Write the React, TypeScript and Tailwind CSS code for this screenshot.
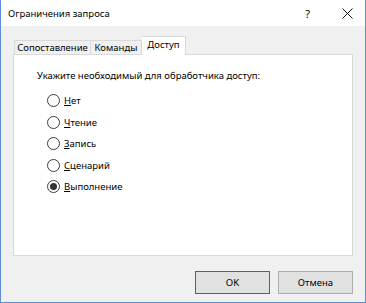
import React from "react";

const font = { fontFamily: '"Noto Sans", "Open Sans", sans-serif' };

function Radio({ label, checked }: { label: string; checked?: boolean }) {
  const first = label.slice(0, 1);
  const rest = label.slice(1);
  return (
    <div className="flex items-center h-[21.5px]">
      <div className="w-[13px] h-[13px] rounded-full border border-[#3c3c3c] bg-white flex items-center justify-center">
        {checked && <div className="w-[7px] h-[7px] rounded-full bg-[#333333]" />}
      </div>
      <span className="ml-[4px] text-[9.5px] text-black leading-[13px]">
        <span className="underline underline-offset-1">{first}</span>
        {rest}
      </span>
    </div>
  );
}

export default function App() {
  return (
    <div
      className="w-[366px] h-[303px] flex flex-col bg-[#f0f0f0] border-l border-r border-b border-[#5f8fce] overflow-hidden"
      style={font}
    >
      <div className="h-[26px] bg-white flex items-center pl-[7px] shrink-0">
        <span className="text-[9.5px] text-black leading-[13px]">Ограничения запроса</span>
        <span className="ml-auto text-[11px] text-black leading-[13px] mr-[32px]">?</span>
        <svg width="11" height="11" viewBox="0 0 11 11" className="mr-[12px]">
          <path d="M0.5 0.5 L10.5 10.5 M10.5 0.5 L0.5 10.5" stroke="#111" strokeWidth="1" />
        </svg>
      </div>
      <div className="flex-1 flex flex-col px-[12px]">
        <div className="flex items-end h-[18px] mt-[11px] pl-[1px] relative z-10 -mb-px">
          <div className="h-[15px] w-[77px] border border-[#d9d9d9] bg-[#f0f0f0] text-[9.5px] leading-[13px] text-black flex justify-center">
            Сопоставление
          </div>
          <div className="h-[15px] w-[51px] border border-l-0 border-[#d9d9d9] bg-[#f0f0f0] text-[9.5px] leading-[13px] text-black flex justify-center">
            Команды
          </div>
          <div className="h-[19px] w-[44px] border border-l-0 border-b-0 border-[#d9d9d9] bg-white text-[9.5px] leading-[16px] text-black flex justify-center">
            Доступ
          </div>
        </div>
        <div className="h-[202px] border border-[#d9d9d9] bg-white pl-[23px] pt-[14px]">
          <div className="text-[9.5px] leading-[13px] text-black">
            Укажите необходимый для обработчика доступ:
          </div>
          <div className="mt-[8px] pl-[10px] flex flex-col">
            <Radio label="Нет" />
            <Radio label="Чтение" />
            <Radio label="Запись" />
            <Radio label="Сценарий" />
            <Radio label="Выполнение" checked />
          </div>
        </div>
        <div className="flex justify-end gap-[8px] mt-[15px]">
          <button className="w-[75px] h-[23px] border border-[#0078d7] bg-[#e1e1e1] text-[9.5px] text-black leading-[13px]">
            OK
          </button>
          <button className="w-[75px] h-[23px] border border-[#adadad] bg-[#e1e1e1] text-[9.5px] text-black leading-[13px]">
            Отмена
          </button>
        </div>
      </div>
    </div>
  );
}
